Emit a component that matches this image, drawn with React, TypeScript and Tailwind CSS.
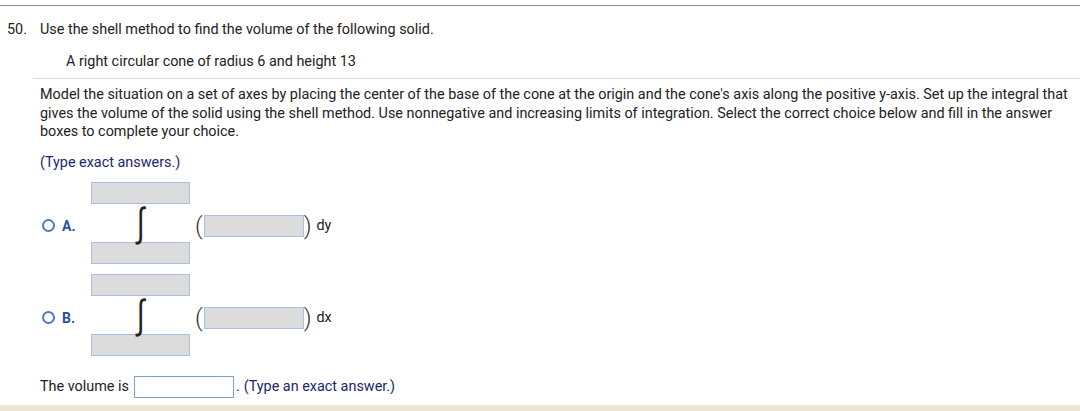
import React from "react";

function LimitBox() {
  return <div className="h-[22px] w-[99px] border border-[#a9c0de] bg-[#dcdcdc]" />;
}

function Choice({ letter, variable }: { letter: string; variable: string }) {
  return (
    <div className="flex items-start pl-[42px]">
      <div className="mt-[37px] flex w-[49px] items-center">
        <span className="h-[13px] w-[13px] rounded-full border-2 border-[#5474c8] bg-white" />
        <span className="ml-[7px] text-[14px] font-bold leading-none text-[#2f4d9e]">{letter}.</span>
      </div>
      <div className="flex flex-col">
        <LimitBox />
        <div className="flex h-[38px] items-center justify-center">
          <span className="font-['DejaVu_Sans',sans-serif] text-[28px] font-extralight leading-none text-[#222] [transform:scaleY(1.45)]">
            ∫
          </span>
        </div>
        <LimitBox />
      </div>
      <div className="mt-[33px] ml-[5px] flex h-[22px] items-center">
        <span className="text-[24px] font-light leading-none text-[#333]">(</span>
        <div className="ml-[1px] h-[22px] w-[100px] border border-[#a9c0de] bg-[#dcdcdc]" />
        <span className="text-[24px] font-light leading-none text-[#333]">)</span>
        <span className="ml-[5px] text-[14.4px]">{variable}</span>
      </div>
    </div>
  );
}

export default function App() {
  return (
    <div className="flex h-[411px] w-[1080px] flex-col overflow-hidden bg-white font-['Roboto',sans-serif] text-[14.4px] text-[#222]">
      <div className="mt-[5px] border-t border-[#8c8c8c]" />

      <div className="mt-[15px] flex leading-[18px]">
        <span className="w-[40px] pl-[7px]">50.</span>
        <span>Use the shell method to find the volume of the following solid.</span>
      </div>
      <div className="mt-[14px] pl-[66px] leading-[18px]">
        A right circular cone of radius 6 and height 13
      </div>
      <div className="ml-[33px] mt-[7px] border-t border-[#d3dbe6]" />

      <p className="mt-[7px] pl-[40px] pr-[12px] leading-[18.5px]">
        Model the situation on a set of axes by placing the center of the base of the cone at the origin and the
        cone's axis along the positive y-axis. Set up the integral that gives the volume of the solid using the shell
        method. Use nonnegative and increasing limits of integration. Select the correct choice below and fill in the
        answer boxes to complete your choice.
      </p>
      <p className="mt-[12px] pl-[40px] leading-[18px] text-[#1d2670]">(Type exact answers.)</p>

      <div className="mt-[10px] flex flex-col gap-[10px]">
        <Choice letter="A" variable="dy" />
        <Choice letter="B" variable="dx" />
      </div>

      <div className="mt-[20px] flex items-center pl-[40px]">
        <span>The volume is</span>
        <div className="ml-[5px] h-[22px] w-[100px] border border-[#7f9fcc] bg-white" />
        <span className="ml-[2px]">.</span>
        <span className="ml-[4px] text-[#1d2670]">(Type an exact answer.)</span>
      </div>

      <div className="mt-[7px] h-[10px] bg-[#ece4d7]" />
    </div>
  );
}
